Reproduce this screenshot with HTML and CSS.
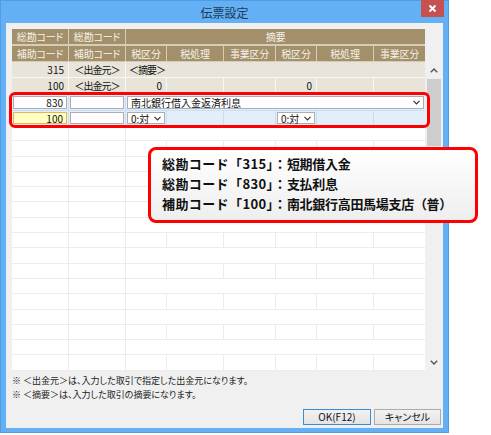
FILE: index.html
```html
<!DOCTYPE html>
<html lang="ja">
<head>
<meta charset="utf-8">
<title>伝票設定</title>
<link rel="stylesheet" href="styles.css">
</head>
<body>
<div class="screen">
  <div class="window">
    <div class="titlebar">
      <span></span>
      <span class="title">伝票設定</span>
      <span class="close"><svg width="9" height="9" viewBox="0 0 9 9"><path d="M1.5 1.5 L7.5 7.5 M7.5 1.5 L1.5 7.5" stroke="#fff" stroke-width="2"/></svg></span>
    </div>
    <div class="client">
      <div class="gridwrap">
        <div class="grid">
          <div class="c h">総勘コード</div>
          <div class="c h">総勘コード</div>
          <div class="c h span6 last">摘要</div>

          <div class="c h h2">補助コード</div>
          <div class="c h h2">補助コード</div>
          <div class="c h h2">税区分</div>
          <div class="c h h2">税処理</div>
          <div class="c h h2">事業区分</div>
          <div class="c h h2">税区分</div>
          <div class="c h h2">税処理</div>
          <div class="c h h2 last">事業区分</div>

          <div class="c d r">315</div>
          <div class="c d ctr br">＜出金元＞</div>
          <div class="c d span6 l last br">＜摘要＞</div>

          <div class="c d r">100</div>
          <div class="c d ctr br">＜出金元＞</div>
          <div class="c d r">0</div>
          <div class="c d"></div>
          <div class="c d"></div>
          <div class="c d r">0</div>
          <div class="c d"></div>
          <div class="c d last"></div>

          <div class="c e e1"><span class="inp r">830</span></div>
          <div class="c e e1"><span class="inp"></span></div>
          <div class="c e e1 span6 last"><span class="inp sel">南北銀行借入金返済利息<svg class="chev" width="7" height="5" viewBox="0 0 7 5"><path d="M0.5 0.8 L3.5 3.8 L6.5 0.8" fill="none" stroke="#333" stroke-width="1.2"/></svg></span></div>

          <div class="c e e2"><span class="inp r focus">100</span></div>
          <div class="c e e2"><span class="inp"></span></div>
          <div class="c e e2"><span class="inp sel">0:対<svg class="chev" width="7" height="5" viewBox="0 0 7 5"><path d="M0.5 0.8 L3.5 3.8 L6.5 0.8" fill="none" stroke="#333" stroke-width="1.2"/></svg></span></div>
          <div class="c e e2"></div>
          <div class="c e e2"></div>
          <div class="c e e2"><span class="inp sel">0:対<svg class="chev" width="7" height="5" viewBox="0 0 7 5"><path d="M0.5 0.8 L3.5 3.8 L6.5 0.8" fill="none" stroke="#333" stroke-width="1.2"/></svg></span></div>
          <div class="c e e2"></div>
          <div class="c e e2 last"></div>

          <div class="c w"></div><div class="c w"></div><div class="c w span6 last"></div>
          <div class="c w"></div><div class="c w"></div><div class="c w"></div><div class="c w"></div><div class="c w"></div><div class="c w"></div><div class="c w"></div><div class="c w last"></div>
          <div class="c w"></div><div class="c w"></div><div class="c w span6 last"></div>
          <div class="c w"></div><div class="c w"></div><div class="c w"></div><div class="c w"></div><div class="c w"></div><div class="c w"></div><div class="c w"></div><div class="c w last"></div>
          <div class="c w"></div><div class="c w"></div><div class="c w span6 last"></div>
          <div class="c w"></div><div class="c w"></div><div class="c w"></div><div class="c w"></div><div class="c w"></div><div class="c w"></div><div class="c w"></div><div class="c w last"></div>
          <div class="c w"></div><div class="c w"></div><div class="c w span6 last"></div>
          <div class="c w"></div><div class="c w"></div><div class="c w"></div><div class="c w"></div><div class="c w"></div><div class="c w"></div><div class="c w"></div><div class="c w last"></div>
          <div class="c w"></div><div class="c w"></div><div class="c w span6 last"></div>
          <div class="c w"></div><div class="c w"></div><div class="c w"></div><div class="c w"></div><div class="c w"></div><div class="c w"></div><div class="c w"></div><div class="c w last"></div>
          <div class="c w"></div><div class="c w"></div><div class="c w span6 last"></div>
          <div class="c w"></div><div class="c w"></div><div class="c w"></div><div class="c w"></div><div class="c w"></div><div class="c w"></div><div class="c w"></div><div class="c w last"></div>
          <div class="c w"></div><div class="c w"></div><div class="c w span6 last"></div>
          <div class="c w"></div><div class="c w"></div><div class="c w"></div><div class="c w"></div><div class="c w"></div><div class="c w"></div><div class="c w"></div><div class="c w last"></div>
          <div class="c w"></div><div class="c w"></div><div class="c w span6 last"></div>
          <div class="c w"></div><div class="c w"></div><div class="c w"></div><div class="c w"></div><div class="c w"></div><div class="c w"></div><div class="c w"></div><div class="c w last"></div>
        </div>
        <div class="vscroll">
          <div class="vs-head"></div>
          <div class="vs-btn"><svg width="8" height="5" viewBox="0 0 8 5"><path d="M0.8 4.2 L4 1 L7.2 4.2" fill="none" stroke="#555" stroke-width="1.4"/></svg></div>
          <div class="vs-track"><div class="vs-thumb"></div></div>
          <div class="vs-btn"><svg width="8" height="5" viewBox="0 0 8 5"><path d="M0.8 0.8 L4 4 L7.2 0.8" fill="none" stroke="#555" stroke-width="1.4"/></svg></div>
        </div>
      </div>
      <div class="notes">
        <p>※ ＜出金元＞は、入力した取引で指定した出金元になります。</p>
        <p>※ ＜摘要＞は、入力した取引の摘要になります。</p>
      </div>
      <div class="buttons">
        <span class="btn default">OK(F12)</span>
        <span class="btn">キャンセル</span>
      </div>
    </div>
    <div class="redbox"></div>
  </div>
  <div class="callout">
    <p>総勘コード「315」：<span class="val">短期借入金</span></p>
    <p>総勘コード「830」：<span class="val">支払利息</span></p>
    <p>補助コード「100」：<span class="val">南北銀行高田馬場支店（普）</span></p>
  </div>
</div>
</body>
</html>
```
FILE: styles.css
```css
* { box-sizing: border-box; margin: 0; padding: 0; }
body {
  margin: 0;
  background: #fff;
  font-family: "Noto Sans CJK JP", "Noto Sans", sans-serif;
  font-feature-settings: "palt";
  color: #000;
}
.screen { position: relative; width: 491px; height: 435px; }

.window {
  position: relative;
  width: 449px;
  height: 433px;
  background: #63b0f4;
  border: 1px solid #4e9de6;
  display: flex;
  flex-direction: column;
}
.titlebar {
  height: 22px;
  display: grid;
  grid-template-columns: 1fr auto 1fr;
  align-items: start;
}
.title {
  font-size: 12px;
  line-height: 22px;
  color: #1d3859;
  padding-top: 1px;
}
.close {
  justify-self: end;
  width: 23px;
  height: 17px;
  margin-top: -1px;
  margin-right: 4px;
  background: #c75050;
  display: flex;
  align-items: center;
  justify-content: center;
}

.client {
  flex: 1;
  margin: 0 5px 4px 5px;
  background: #f0f0f0;
  padding: 6px 1px 0 6px;
  display: flex;
  flex-direction: column;
}
.gridwrap { display: flex; height: 342px; }
.grid {
  width: 413px;
  height: 342px;
  overflow: hidden;
  background: #fff;
  display: grid;
  grid-template-columns: 57px 57px 41px 57px 52px 41px 57px 51px;
  grid-template-rows: 17px 16px 16px 16px 16px 16px;
  grid-auto-rows: 15.3px;
  align-content: start;
}
.c {
  border-right: 1px solid #ececec;
  border-bottom: 1px solid #ececec;
  font-size: 10px;
  line-height: 14px;
  white-space: nowrap;
  overflow: hidden;
  display: flex;
  align-items: center;
}
.c.last { border-right: none; }
.span6 { grid-column: span 6; }
.h {
  background: #a38f69;
  color: #f6f3ea;
  justify-content: center;
  border-right: 1px solid #d6cdb8;
  border-bottom: 2px solid #d6cdb8;
  letter-spacing: -0.2px;
}
.h.h2 { border-bottom: 1px solid #d6cdb8; }
.d {
  background: #e8e4da;
  border-right: 1px solid #f8f7f3;
  border-bottom: 1px solid #f8f7f3;
  color: #111;
}
.d.br { font-feature-settings: normal; letter-spacing: -1px; }
.r { justify-content: flex-end; padding-right: 4px; }
.ctr { justify-content: center; }
.l { padding-left: 3px; }

.e {
  background: #e2effb;
  border-right: 1px solid #c9dff0;
  border-bottom: none;
  padding: 1px;
}
.e1 { border-top: 1px solid #92cfe9; }
.e2 { border-top: 1px solid #c9dff0; border-bottom: 1px solid #92cfe9; }
.inp {
  flex: 1;
  align-self: stretch;
  background: #fff;
  border: 1px solid #abadb3;
  font-size: 10px;
  line-height: 11px;
  display: flex;
  align-items: center;
  padding: 0 2px;
  color: #111;
}
.inp.r { justify-content: flex-end; padding-right: 3px; }
.inp.focus { background: #ffffc4; border-color: #e6b35a; }
.inp.sel { justify-content: space-between; padding-left: 3px; padding-right: 3px; }
.chev { flex: none; }

.w { background: #fff; }

.vscroll {
  width: 17px;
  display: flex;
  flex-direction: column;
}
.vs-head { height: 33px; background: #f0f0f0; }
.vs-btn {
  height: 17px;
  background: #f0f0f0;
  display: flex;
  align-items: center;
  justify-content: center;
}
.vs-track { flex: 1; background: #f0f0f0; padding: 0 1px 0 2px; }
.vs-thumb { height: 67px; background: #cdcdcd; }

.notes {
  padding-top: 3px;
  font-size: 9px;
  line-height: 13.5px;
  color: #222;
}
.buttons {
  margin-top: auto;
  display: flex;
  justify-content: flex-end;
  gap: 3px;
  padding: 0 1px 3px 0;
}
.btn {
  width: 68px;
  height: 16px;
  border: 1px solid #acacac;
  background: linear-gradient(#f2f2f2, #e4e4e4);
  font-size: 10px;
  line-height: 14px;
  display: flex;
  align-items: center;
  justify-content: center;
  color: #111;
}
.btn + .btn { width: 67px; }
.btn.default { border-color: #3c8ad8; }

.redbox {
  position: absolute;
  left: 8px;
  top: 91px;
  width: 421px;
  height: 36px;
  border: 3px solid #ff0000;
  border-radius: 6px;
}
.callout {
  position: absolute;
  left: 148px;
  top: 147px;
  width: 330px;
  height: 76px;
  border: 3px solid #ff0000;
  border-radius: 8px;
  background: linear-gradient(#ffffff, #eeeeee);
  padding: 4px 0 0 11px;
  font-size: 13px;
  font-weight: bold;
  line-height: 20px;
  color: #111;
  letter-spacing: 0.4px;
  font-feature-settings: normal;
}
.callout .val { letter-spacing: -0.3px; }
```
